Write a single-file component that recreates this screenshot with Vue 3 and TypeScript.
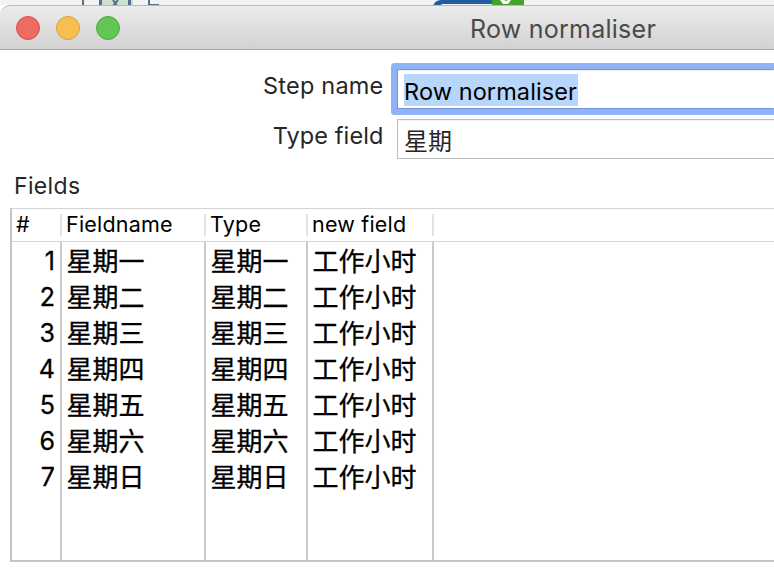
<script setup lang="ts">
interface FieldRow {
  name: string
  type: string
  target: string
}

const days: string[] = ['星期一', '星期二', '星期三', '星期四', '星期五', '星期六', '星期日']
const rows: FieldRow[] = days.map((day) => ({ name: day, type: day, target: '工作小时' }))
</script>

<template>
  <div class="screen">
    <div class="canvas">
      <svg width="774" height="6" viewBox="0 0 774 6">
        <path d="M83 0V6M149 0V5H159" fill="none" stroke="#53708f" stroke-width="2" />
        <rect x="99" y="0" width="34" height="6" fill="#cfe2cc" />
        <path d="M100.500 0V6M129.500 0V6" stroke="#53708f" stroke-width="3" />
        <path d="M113 0L117 6M118 0L113 6" stroke="#53708f" stroke-width="2" />
        <path d="M433 6Q435 0 441 0H494V6Z" fill="#215da0" />
        <path d="M440 6L442 4H494V6Z" fill="#eef2f8" />
        <rect x="492" y="0" width="32" height="6" fill="#45a22b" />
        <path d="M500 0H511L508 4H503Z" fill="#fff" />
        <path d="M504 0H508L506 1Z" fill="#45a22b" />
      </svg>
    </div>
    <header class="titlebar">
      <div class="lights">
        <span class="light close"></span>
        <span class="light minimise"></span>
        <span class="light zoom"></span>
      </div>
      <div class="title">Row normaliser</div>
    </header>

    <section class="form">
      <div class="line first">
        <label>Step name</label>
        <div class="input focused"><span class="selection">Row normaliser</span></div>
      </div>
      <div class="line second">
        <label>Type field</label>
        <div class="input"><span>星期</span></div>
      </div>
    </section>

    <div class="caption">Fields</div>
    <section class="table">
      <div class="head">
        <div class="cell num">#</div>
        <div class="cell name">Fieldname</div>
        <div class="cell type">Type</div>
        <div class="cell target">new field</div>
      </div>
      <div class="body">
        <div class="column num">
          <div v-for="(row, i) in rows" :key="row.name">{{ i + 1 }}</div>
        </div>
        <div class="column name">
          <div v-for="row in rows" :key="row.name">{{ row.name }}</div>
        </div>
        <div class="column type">
          <div v-for="row in rows" :key="row.name">{{ row.type }}</div>
        </div>
        <div class="column target">
          <div v-for="row in rows" :key="row.name">{{ row.target }}</div>
        </div>
      </div>
    </section>
  </div>
</template>

<style>
body {
  margin: 0;
  background: #fff;
}
</style>

<style scoped>
* {
  box-sizing: border-box;
}
.screen {
  width: 774px;
  height: 578px;
  overflow: hidden;
  background: #fff;
  color: #262626;
  font-family: Inter, "Noto Sans CJK SC", sans-serif;
  white-space: nowrap;
}
.canvas {
  height: 5px;
  background: #f2f2f2;
}
.canvas svg {
  display: block;
}
.titlebar {
  position: relative;
  display: flex;
  align-items: center;
  height: 45px;
  border-top: 1px solid #b9b9b9;
  border-bottom: 1px solid #a9a9a9;
  border-top-left-radius: 10px;
  background: linear-gradient(#ececec, #d2d2d2);
}
.lights {
  display: flex;
  gap: 16px;
  width: 470px;
  padding-left: 16px;
}
.light {
  width: 24px;
  height: 24px;
  border-radius: 50%;
  border: 1px solid;
}
.close {
  background: #ed6b60;
  border-color: #d9524a;
}
.minimise {
  background: #f5c04f;
  border-color: #dba03b;
}
.zoom {
  background: #62c655;
  border-color: #4cac3c;
}
.title {
  color: #4a4a4a;
  font-size: 25px;
  letter-spacing: 0.25px;
  line-height: 40px;
  padding-top: 3px;
}
.form {
  padding-top: 13px;
}
.line {
  display: flex;
}
.line label {
  width: 383.5px;
  text-align: right;
  font-size: 23.5px;
  letter-spacing: 0.2px;
  line-height: 30px;
}
.first {
  height: 52px;
}
.first label {
  padding-top: 8px;
}
.second {
  height: 44px;
  padding-top: 4px;
}
.second label {
  padding-top: 2px;
  letter-spacing: 0.1px;
}
.input {
  flex: 1;
  height: 40px;
  margin-left: 13.5px;
  padding-left: 6px;
  border: 1px solid #bdbdbd;
  border-right: 0;
  box-shadow: inset 0 1px #f0f0f0;
  font-size: 24px;
  line-height: 44px;
}
.input.focused {
  height: 40px;
  margin-top: 6px;
  padding: 4px 0 0 6px;
  border-color: #7494dc;
  box-shadow: 0 0 0 6px #90b2f6, inset 0 1px #f0f0f0;
  border-radius: 1px;
  color: #000;
  font-size: 23.5px;
  letter-spacing: 0.1px;
  line-height: 36px;
}
.selection {
  display: block;
  width: 174px;
  height: 32px;
  background: #b7d6fb;
}
.caption {
  height: 49px;
  padding: 12px 0 0 14px;
  font-size: 23px;
  letter-spacing: 0.35px;
  line-height: 30px;
}
.table {
  display: flex;
  flex-direction: column;
  height: 354px;
  margin-left: 10px;
  border-left: 2px solid #c5c5c5;
  border-top: 1px solid #d3d3d3;
  border-bottom: 2px solid #c5c5c5;
  color: #000;
}
.head {
  display: flex;
  height: 33px;
  padding: 5px 0;
  border-bottom: 1px solid #d3d3d3;
  font-size: 21.5px;
  letter-spacing: 0.2px;
  line-height: 20px;
}
.cell {
  padding-left: 4px;
  border-right: 2px solid #e3e3e3;
}
.body {
  display: flex;
  flex: 1;
  font-size: 26px;
  line-height: 36px;
  -webkit-text-stroke: 0.3px #000;
}
.column {
  padding: 2px 0 0 4.5px;
  border-right: 2px solid #c9c9c9;
}
.num {
  width: 50px;
}
.column.num {
  padding-top: 1px;
  padding-right: 5px;
  text-align: right;
  font-size: 25px;
}
.name {
  width: 144px;
}
.type {
  width: 102px;
}
.target {
  width: 126px;
}
</style>
